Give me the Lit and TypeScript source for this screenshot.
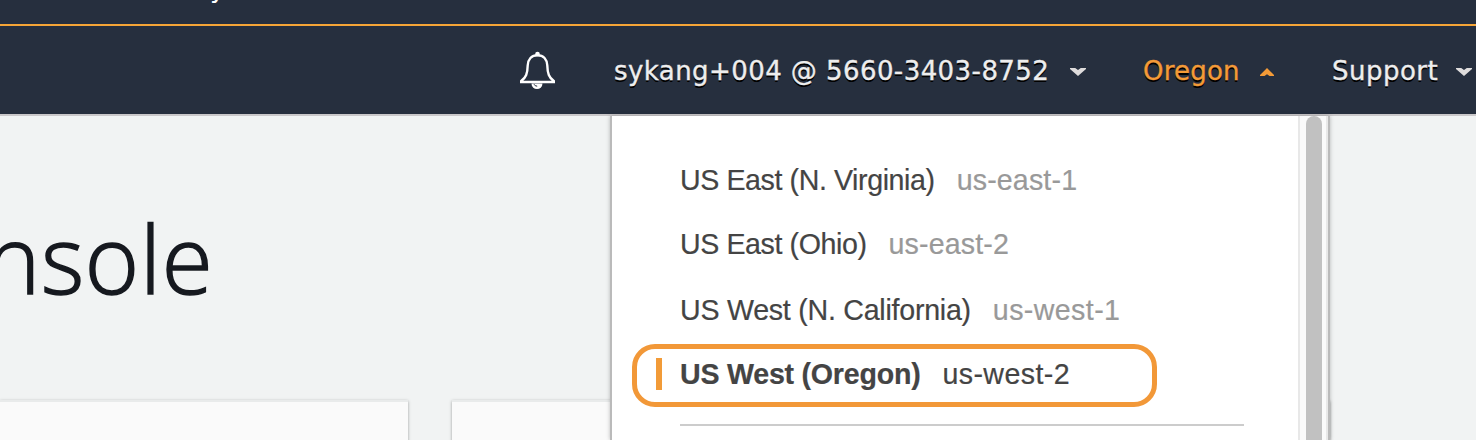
import { LitElement, html, css, svg } from "lit";
import { customElement, property } from "lit/decorators.js";
import { classMap } from "lit/directives/class-map.js";

const REGIONS = [
  { name: "US East (N. Virginia)", code: "us-east-1" },
  { name: "US East (Ohio)", code: "us-east-2" },
  { name: "US West (N. California)", code: "us-west-1", west: true },
  { name: "US West (Oregon)", code: "us-west-2", current: true },
];

@customElement("nav-caret")
class NavCaret extends LitElement {
  @property({ type: Boolean }) up = false;
  static styles = css`
    :host { display: block; width: 16px; height: 10px; margin-top: 2px; }
    svg { display: block; }
    .down { fill: #dedcdc; }
    .up { fill: #f49b37; }
  `;
  render() {
    return html`<svg width="16" height="10" viewBox="0 0 16 10">
      ${this.up
        ? svg`<path class="up" d="M2 9v-1L9 1l7 7v1h-4.500L9 7.300 6.500 9z" />`
        : svg`<path class="down" d="M0 1h5.200L8 3l2.800-2H16v1L8 9 0 2z" />`}
    </svg>`;
  }
}

@customElement("region-menu")
class RegionMenu extends LitElement {
  static styles = css`
    :host {
      display: flex; box-sizing: border-box; width: 720px; height: 324px;
      border: solid #bababa; border-width: 0 2px; background: #fff;
      box-shadow: 0 0 4px rgba(0, 0, 0, 0.25);
      font-family: "Liberation Sans", Arial, sans-serif; font-size: 28.6px;
    }
    .list { flex: 1; padding: 32px 54px 0 20px; }
    .row {
      display: flex; align-items: center; box-sizing: border-box; height: 64.67px;
      padding-left: 48px; white-space: nowrap; color: #444;
      -webkit-text-stroke: 0.2px currentColor;
    }
    .name { letter-spacing: -0.41px; }
    .code { margin-left: 22px; color: #999; letter-spacing: 0.15px; }
    .west { padding-top: 2px; }
    .west .name { letter-spacing: -0.25px; }
    .west .code, .current .code { letter-spacing: 0.4px; }
    .current { position: relative; }
    .current .name { font-weight: bold; letter-spacing: -0.23px; }
    .current .code { color: #444; }
    .ring {
      position: absolute; left: 0; top: 2px; box-sizing: border-box;
      width: 525px; height: 63px; border: 5px solid #f29838; border-radius: 23px;
    }
    .mark { position: absolute; left: 24px; top: 16px; width: 6px; height: 32px; background: #f29b38; }
    .rule { height: 2px; margin: 17px 0 0 48px; background: #ccc; }
    .scroll {
      box-sizing: border-box; width: 30px; padding: 0 4px 0 6px; background: #fafafa;
      border: solid #e8e8e8; border-width: 0 2px; overflow: hidden;
    }
    .thumb { width: 16px; height: 340px; border-radius: 8px; background: #c1c1c1; }
  `;
  render() {
    return html`
      <div class="list">
        ${REGIONS.map(
          (r) => html`<div class=${classMap({ row: true, current: !!r.current, west: !!r.west })}>
            ${r.current ? html`<div class="ring"></div><div class="mark"></div>` : ""}
            <span class="name">${r.name}</span><span class="code">${r.code}</span>
          </div>`
        )}
        <div class="rule"></div>
      </div>
      <div class="scroll"><div class="thumb"></div></div>
    `;
  }
}

@customElement("app-root")
class AppRoot extends LitElement {
  static styles = css`
    :host {
      display: block; position: relative; width: 1476px; height: 440px;
      overflow: hidden; background: #f1f3f3;
      font-family: "DejaVu Sans", Verdana, sans-serif;
    }
    .strip { height: 24px; overflow: hidden; background: #262f3e; color: #fff; }
    .tail { margin: -27px 0 0 210px; font-size: 26px; line-height: 30px; }
    .nav {
      display: flex; align-items: center; box-sizing: border-box; height: 92px;
      padding: 1px 0 0 519px; border-top: 2px solid #f5a537; border-bottom: 2px solid #cac8ca;
      background: #262f3e; color: #eee; font-size: 26px; letter-spacing: 0.48px;
      white-space: nowrap; text-shadow: 0 2px 0 #000;
    }
    .bell { display: block; flex: none; margin-bottom: 2px; }
    .item { display: flex; align-items: center; flex: none; }
    .account { margin-left: 57px; width: 474px; letter-spacing: 0.43px; }
    .region { margin-left: 55px; width: 133px; color: #f49b37; letter-spacing: 0.2px; }
    .support { margin-left: 56px; width: 142px; }
    .item span { flex: 1; padding: 1px 0 0 2px; -webkit-text-stroke: 0.35px currentColor; }
    .title {
      height: 284px; padding-top: 77px; box-sizing: border-box; width: 213px;
      display: flex; justify-content: flex-end;
    }
    .title span {
      font: 300 94px/130px "Open Sans", "Noto Sans", sans-serif; color: #16191f;
      letter-spacing: 0.8px; -webkit-text-stroke: 1.6px #16191f;
      transform: scaleX(0.985); transform-origin: right;
    }
    .cards { display: flex; gap: 44px; }
    .card {
      flex: none; box-sizing: border-box; height: 60px; background: #fafafa;
      border-top: 2px solid #e9ebeb; box-shadow: 0 1px 3px rgba(0, 0, 0, 0.35);
    }
    .first { width: 408px; }
    .second { width: 878px; }
    region-menu { position: absolute; left: 610px; top: 116px; }
  `;
  render() {
    return html`
      <div class="strip"><div class="tail">y</div></div>
      <div class="nav">
        <svg class="bell" width="36" height="40" viewBox="0 0 36 40" fill="none">
          <path d="M12.500 33.500a5.500 5.500 0 0 0 11 0z" fill="#fff" />
          <path d="M15 34.200q.8 2 3.200 2" stroke="#262f3e" stroke-width="1" />
          <circle cx="18.500" cy="4" r="2.300" fill="#fff" />
          <path d="M18.500 5.200C12.500 5.200 9 9.500 8.700 15.500C8.500 23.500 7 27.500 2.200 31V32H34.800V31C30 27.500 28.500 23.500 28.300 15.500C28 9.500 24.500 5.200 18.500 5.200z" stroke="#fff" stroke-width="2.400" />
        </svg>
        <div class="item account"><span>sykang+004 @ 5660-3403-8752</span><nav-caret></nav-caret></div>
        <div class="item region"><span>Oregon</span><nav-caret up></nav-caret></div>
        <div class="item support"><span>Support</span><nav-caret></nav-caret></div>
      </div>
      <div class="title"><span>nsole</span></div>
      <div class="cards"><div class="card first"></div><div class="card second"></div></div>
      <region-menu></region-menu>
    `;
  }
}
